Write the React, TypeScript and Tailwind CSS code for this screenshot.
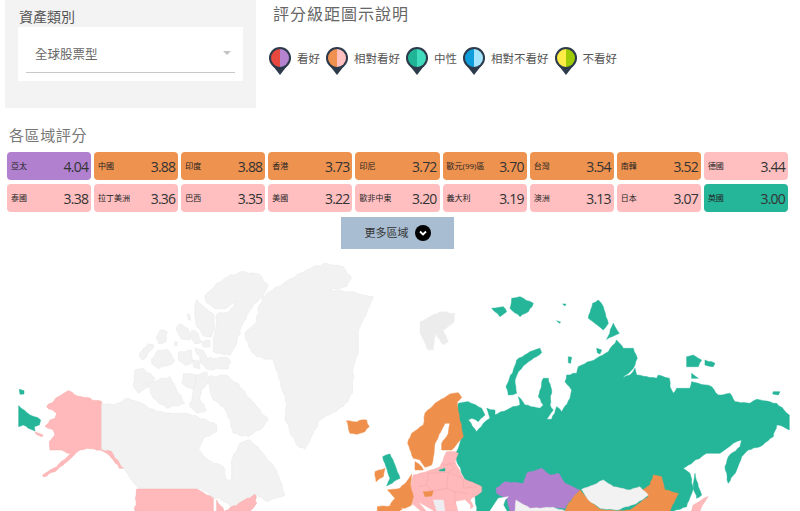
import React from "react";

const FONT = "font-['Open_Sans','Noto_Sans_CJK_TC',sans-serif]";

const PINK = "#ffb9ba";
const ORANGE = "#ee8f4b";
const TEAL = "#25b599";
const PURPLE = "#b181cf";
const GRAY = "#f2f2f2";

const regions = [
  { name: "亞太", score: "4.04", bg: "bg-[#b181cf]" },
  { name: "中國", score: "3.88", bg: "bg-[#ee924f]" },
  { name: "印度", score: "3.88", bg: "bg-[#ee924f]" },
  { name: "香港", score: "3.73", bg: "bg-[#ee924f]" },
  { name: "印尼", score: "3.72", bg: "bg-[#ee924f]" },
  { name: "歐元(99)區", score: "3.70", bg: "bg-[#ee924f]" },
  { name: "台灣", score: "3.54", bg: "bg-[#ee924f]" },
  { name: "南韓", score: "3.52", bg: "bg-[#ee924f]" },
  { name: "德國", score: "3.44", bg: "bg-[#ffbfc0]" },
  { name: "泰國", score: "3.38", bg: "bg-[#ffbfc0]" },
  { name: "拉丁美洲", score: "3.36", bg: "bg-[#ffbfc0]" },
  { name: "巴西", score: "3.35", bg: "bg-[#ffbfc0]" },
  { name: "美國", score: "3.22", bg: "bg-[#ffbfc0]" },
  { name: "歐非中東", score: "3.20", bg: "bg-[#ffbfc0]" },
  { name: "義大利", score: "3.19", bg: "bg-[#ffbfc0]" },
  { name: "澳洲", score: "3.13", bg: "bg-[#ffbfc0]" },
  { name: "日本", score: "3.07", bg: "bg-[#ffbfc0]" },
  { name: "英國", score: "3.00", bg: "bg-[#25b599]" },
];

const legend = [
  { label: "看好", left: "#e8493f", right: "#b583cf" },
  { label: "相對看好", left: "#f0914f", right: "#ffc0bf" },
  { label: "中性", left: "#1fb596", right: "#40dcbd" },
  { label: "相對不看好", left: "#0f9edb", right: "#a5e5ff" },
  { label: "不看好", left: "#ffec47", right: "#9ecb04" },
];

const Pin = ({ left, right }: { left: string; right: string }) => (
  <svg width="24" height="30" viewBox="0 0 24 30" className="shrink-0">
    <path d="M5 20 L12 29 L19 20 Z" fill="#2c3a4b" />
    <circle cx="12" cy="12" r="11" fill="#2c3a4b" />
    <path d="M12 3 A9 9 0 0 0 12 21 Z" fill={left} />
    <path d="M12 3 A9 9 0 0 1 12 21 Z" fill={right} />
  </svg>
);

// each group below is traced at 3x, hence the scale
const north = [
  { fill: PINK, d: "205,422 225,435 305,455 305,598 318,600 335,603 360,640 372,655 358,655 340,630 320,610 300,600 262,595 240,600 220,618 195,640 165,665 130,680 128,675 160,655 195,628 212,610 175,600 150,600 148,575 165,555 160,540 135,528 150,510 165,505 170,490 140,470 175,440" },
  { fill: GRAY, d: "305,460 340,465 385,445 415,455 470,485 510,490 560,490 620,510 650,525 650,545 610,565 595,600 625,630 670,650 680,690 695,690 695,630 720,580 750,570 780,600 830,660 855,735 800,755 770,733 770,745 700,775 660,745 640,745 620,725 590,715 415,715 395,690 372,655 360,640 335,603 305,598" },
  { fill: GRAY, d: "980,40 1030,50 1055,85 1040,110 990,120 1050,125 1090,135 1120,140 1100,190 1075,240 1075,310 1060,350 1058,430 1030,470 960,510 925,580 915,598 890,585 870,545 855,500 860,460 835,380 820,330 770,320 745,290 735,250 770,215 775,170 800,130 850,100 900,70 940,50" },
  { fill: GRAY, d: "405,360 430,355 465,385 445,410 415,430 400,410" },
  { fill: GRAY, d: "440,400 510,380 530,420 555,460 500,475 460,445" },
  { fill: GRAY, d: "550,370 590,375 580,420 545,400" },
  { fill: GRAY, d: "590,375 620,365 625,395 605,420 600,450 620,480 590,490 570,470" },
  { fill: GRAY, d: "625,380 680,375 720,410 770,470 805,510 790,530 745,560 700,550 690,510 670,470 640,450 630,420" },
  { fill: PINK, d: "410,717 590,717 620,735 640,745 640,783 405,783" },
  { fill: PINK, d: "650,750 672,783 650,783" },
  { fill: PINK, d: "675,783 765,733 770,760 750,783" },
  { fill: TEAL, d: "56,467 90,495 122,510 118,525 103,530 105,543 85,535 70,525 56,530" },
  { fill: TEAL, d: "58,418 72,422 72,432 60,433" },
  { fill: PINK, d: "105,545 130,556 125,560 108,552" },
  { fill: ORANGE, d: "1040,512 1060,515 1100,510 1108,530 1095,545 1070,553 1050,550 1045,530" },
];

const arctic = [
  { fill: GRAY, d: "225,100 255,72 285,48 330,30 385,35 415,70 400,105 372,125 350,160 330,205 318,250 300,280 250,270 250,235 258,190 262,155 300,148 320,115 285,140 255,140 232,125" },
  { fill: GRAY, d: "200,112 222,135 250,155 255,200 245,225 220,222 198,185 193,150" },
  { fill: GRAY, d: "150,185 175,200 180,235 155,232 138,205" },
  { fill: GRAY, d: "185,205 205,215 215,240 195,245 180,225" },
  { fill: GRAY, d: "90,205 112,210 108,240 85,245 78,228" },
  { fill: GRAY, d: "28,275 55,245 72,250 50,285 38,295" },
  { fill: GRAY, d: "65,290 85,265 110,262 135,295 115,310 85,320 65,305" },
  { fill: GRAY, d: "145,270 185,265 190,300 165,310 145,295" },
  { fill: GRAY, d: "195,258 220,265 232,290 290,285 303,300 295,320 230,322 210,295" },
  { fill: GRAY, d: "190,295 212,300 210,320 190,315" },
  { fill: GRAY, d: "215,240 240,235 240,255 220,255" },
  { fill: GRAY, d: "135,238 142,240 140,252 133,250" },
  { fill: GRAY, d: "172,155 180,158 182,175 174,172" },
];

const russia = [
  { fill: TEAL, d: "175,370 205,365 245,385 255,405 235,425 215,415 205,420 230,455 250,430 270,415 260,385 285,390 285,405 330,385 360,375 355,350 375,375 420,385 430,375 415,350 430,295 445,295 455,330 450,375 460,390 440,418 455,418 470,380 485,395 510,355 515,330 495,305 500,285 530,280 535,260 590,235 625,215 650,180 670,205 700,205 712,235 700,265 668,295 690,285 705,265 710,285 770,295 775,285 808,295 810,320 820,340 830,325 870,325 875,305 935,320 955,345 990,340 1005,365 1050,370 1070,358 1130,370 1168,405 1168,450 1150,440 1130,435 1120,470 1080,500 1045,510 1025,530 1010,570 985,610 975,560 985,530 1020,500 1025,480 1000,490 960,520 920,520 850,565 870,580 880,625 860,680 820,693 230,693 225,650 195,600 165,530 175,505 185,470 175,430 170,395" },
  { fill: TEAL, d: "420,205 425,218 380,250 355,275 345,300 350,340 325,345 318,320 340,270 350,240 390,215" },
  { fill: TEAL, d: "595,60 610,80 625,130 610,150 585,130 565,115 578,70" },
  { fill: TEAL, d: "640,130 658,160 620,178" },
  { fill: TEAL, d: "275,85 310,80 320,95 300,110" },
  { fill: TEAL, d: "335,55 360,50 400,70 385,95 360,110 330,85" },
  { fill: TEAL, d: "860,230 880,225 905,240 895,260 860,260" },
  { fill: TEAL, d: "915,240 945,250 940,260 915,255" },
  { fill: TEAL, d: "875,280 895,295 875,295" },
  { fill: TEAL, d: "1120,335 1140,335 1135,345 1118,342" },
  { fill: TEAL, d: "885,580 895,620 905,645 890,655 880,620" },
  { fill: TEAL, d: "505,230 515,232 512,250 505,248" },
  { fill: TEAL, d: "590,205 605,210 600,222 592,218" },
  { fill: TEAL, d: "470,122 482,126 478,130" },
  { fill: TEAL, d: "488,72 498,72 495,78" },
  { fill: PINK, d: "875,693 880,675 905,660 925,650 905,680 900,693" },
  { fill: "#ececec", d: "60,125 120,95 165,100 160,130 130,150 145,185 130,195 105,160 100,210 85,210 60,160" },
];

const europe = [
  { fill: ORANGE, d: "265,8 275,22 262,35 265,65 280,140 262,160 245,180 215,180 215,160 235,130 240,100 225,100 195,160 190,200 185,225 165,232 150,210 130,205 113,160 125,130 160,105 165,70 195,40 240,12" },
  { fill: ORANGE, d: "135,215 155,230 160,240 135,240" },
  { fill: PINK, d: "230,185 255,185 265,190 255,215 280,265 335,290 335,305 300,330 310,350 290,363 130,363 122,290 130,255 170,245 210,230" },
  { fill: TEAL, d: "208,240 225,235 225,243 208,243" },
  { fill: TEAL, d: "38,200 60,192 75,225 90,265 50,288 60,265 48,230" },
  { fill: ORANGE, d: "15,245 45,235 40,260 18,275" },
  { fill: ORANGE, d: "125,253 122,290 130,320 120,360 100,355 60,345 75,325 52,300 90,295 110,275" },
  { fill: ORANGE, d: "22,350 90,345 100,363 22,363" },
  { fill: ORANGE, d: "160,305 190,302 185,318 165,320" },
  { fill: "#ffffff", d: "90,363 130,345 150,363" },
  { fill: "#ffffff", d: "150,340 190,363 170,363" },
  { fill: "#ffffff", d: "258,335 285,330 300,345 300,363 265,363" },
  { fill: "#eeeef2", d: "190,330 220,330 225,363 200,363" },
];

const asia = [
  { fill: PURPLE, d: "18,115 45,95 100,100 110,70 155,55 180,75 205,70 225,100 270,120 230,165 225,175 180,172 130,183 60,183 50,145 20,130" },
  { fill: "#ffffff", d: "0,183 25,145 55,140 45,150 40,165 50,183" },
  { fill: GRAY, d: "75,183 78,150 120,175 190,172 225,183" },
  { fill: ORANGE, d: "270,120 295,150 330,178 380,183 420,180 475,140 455,120 480,105 490,75 515,80 525,120 565,130 555,150 540,183 225,183 235,160" },
  { fill: GRAY, d: "275,118 310,105 340,90 370,110 420,120 450,110 475,135 440,160 380,180 330,175 295,150" },
];

// country borders in central and eastern europe
const borders = [
  "70,55 65,90 78,108",
  "65,55 130,52",
  "130,52 175,70 175,100 215,95",
  "78,108 125,100 150,110 190,115",
  "150,110 150,150",
  "130,20 150,40 130,52",
  "115,30 150,25",
  "40,95 65,90",
  "125,100 130,52",
];

// breaks the long straight edges of a traced shape into a ragged coast
const roughen = (d: string, amp: number) => {
  const pts = d.split(" ").map((p) => p.split(",").map(Number));
  const out: string[] = [];
  pts.forEach(([x, y], i) => {
    const [nx, ny] = pts[(i + 1) % pts.length];
    out.push(`${x},${y}`);
    const dx = nx - x;
    const dy = ny - y;
    if (dx === 0 || dy === 0 || amp === 0) return;
    const len = Math.hypot(dx, dy);
    const n = Math.floor(len / 9);
    for (let k = 1; k < n; k++) {
      const t = k / n;
      const off = amp * Math.sin(k * 2.7 + x * 0.13) * Math.cos(k * 1.3 + y * 0.07);
      out.push(`${(x + dx * t - (dy / len) * off).toFixed(1)},${(y + dy * t + (dx / len) * off).toFixed(1)}`);
    }
  });
  return out.join(" ");
};

const strokeFor = (fill: string) => {
  if (fill === PINK) return "#f5a9ab";
  if (fill === GRAY) return "#e6e6e6";
  return fill;
};

const Shapes = ({ items, at, amp }: { items: { fill: string; d: string }[]; at: string; amp: number }) => (
  <g transform={`${at} scale(0.3333)`}>
    {items.map((s, i) => (
      <polygon
        key={i}
        points={roughen(s.d, s.fill === "#ffffff" ? 0 : amp)}
        fill={s.fill}
        stroke={strokeFor(s.fill)}
        strokeWidth="1.5"
        strokeLinejoin="round"
      />
    ))}
  </g>
);

const WorldMap = () => (
  <svg width="800" height="262" viewBox="0 249 800 262" className="block">
    <Shapes items={north} at="translate(0,250)" amp={3} />
    <Shapes items={arctic} at="translate(130,262)" amp={3.5} />
    <Shapes items={russia} at="translate(400,280)" amp={2} />
    <Shapes items={europe} at="translate(370,390)" amp={1.5} />
    <Shapes items={asia} at="translate(490,450)" amp={1.5} />
    <g transform="translate(405,455) scale(0.3333)" fill="none" stroke="#f2a2a5" strokeWidth="1.5">
      {borders.map((b) => (
        <polyline key={b} points={b} />
      ))}
    </g>
  </svg>
);

const App = () => {
  return (
    <div className={`w-[800px] h-[511px] overflow-hidden bg-white ${FONT}`}>
      <div className="flex items-start pl-[5px]">
        <div className="w-[251px] h-[108px] bg-[#f3f3f3] px-[13px] pt-[7px]">
          <div className="ml-px text-[14px] leading-[20px] text-[#555]">資產類別</div>
          <div className="w-[225px] h-[54px] bg-white px-[8px] pt-[15px]">
            <div className="h-[31px] flex items-center justify-between border-b border-[#c9c9c9] pl-[9px] pr-[4px]">
              <span className="text-[12.5px] text-[#666] pb-[4px]">全球股票型</span>
              <span className="w-0 h-0 border-x-[4px] border-x-transparent border-t-[4px] border-t-[#c4c4c4] mb-[8px]" />
            </div>
          </div>
        </div>
        <div className="ml-[8px]">
          <div className="ml-[9px] pt-[4px] text-[16px] leading-[20px] tracking-[1px] text-[#666]">評分級距圖示說明</div>
          <div className="flex items-center gap-[5px] mt-[22px] ml-[4px]">
            {legend.map((item) => (
              <div key={item.label} className="flex items-center gap-[5px]">
                <Pin left={item.left} right={item.right} />
                <span className="text-[11.5px] text-[#555] pb-[5px]">{item.label}</span>
              </div>
            ))}
          </div>
        </div>
      </div>

      <h2 className="ml-[9px] mt-[17px] text-[15px] leading-[20px] font-normal tracking-[0.6px] text-[#777]">各區域評分</h2>
      <div className="grid grid-cols-9 gap-x-[3px] gap-y-[4px] w-[781px] ml-[7px] mt-[7px]">
        {regions.map((r) => (
          <div key={r.name} className={`${r.bg} h-[28px] rounded-[4px] flex items-center justify-between pl-[4px] pr-[3px]`}>
            <span className="text-[8px] text-[#222] whitespace-nowrap">{r.name}</span>
            <span className="text-[14px] tracking-[-0.8px] text-[#333]">{r.score}</span>
          </div>
        ))}
      </div>

      <div className="flex justify-center mt-[5px] pr-[5px]">
        <button className="w-[113px] h-[32px] bg-[#a9bdd2] flex items-center justify-center gap-[6px] text-[11px] text-[#333]">
          更多區域
          <span className="w-[16px] h-[16px] rounded-full bg-black flex items-center justify-center">
            <svg width="10" height="10" viewBox="0 0 10 10">
              <path d="M2 3.5 L5 6.5 L8 3.5" fill="none" stroke="#fff" strokeWidth="1.8" />
            </svg>
          </span>
        </button>
      </div>

      <WorldMap />
    </div>
  );
};

export default App;
